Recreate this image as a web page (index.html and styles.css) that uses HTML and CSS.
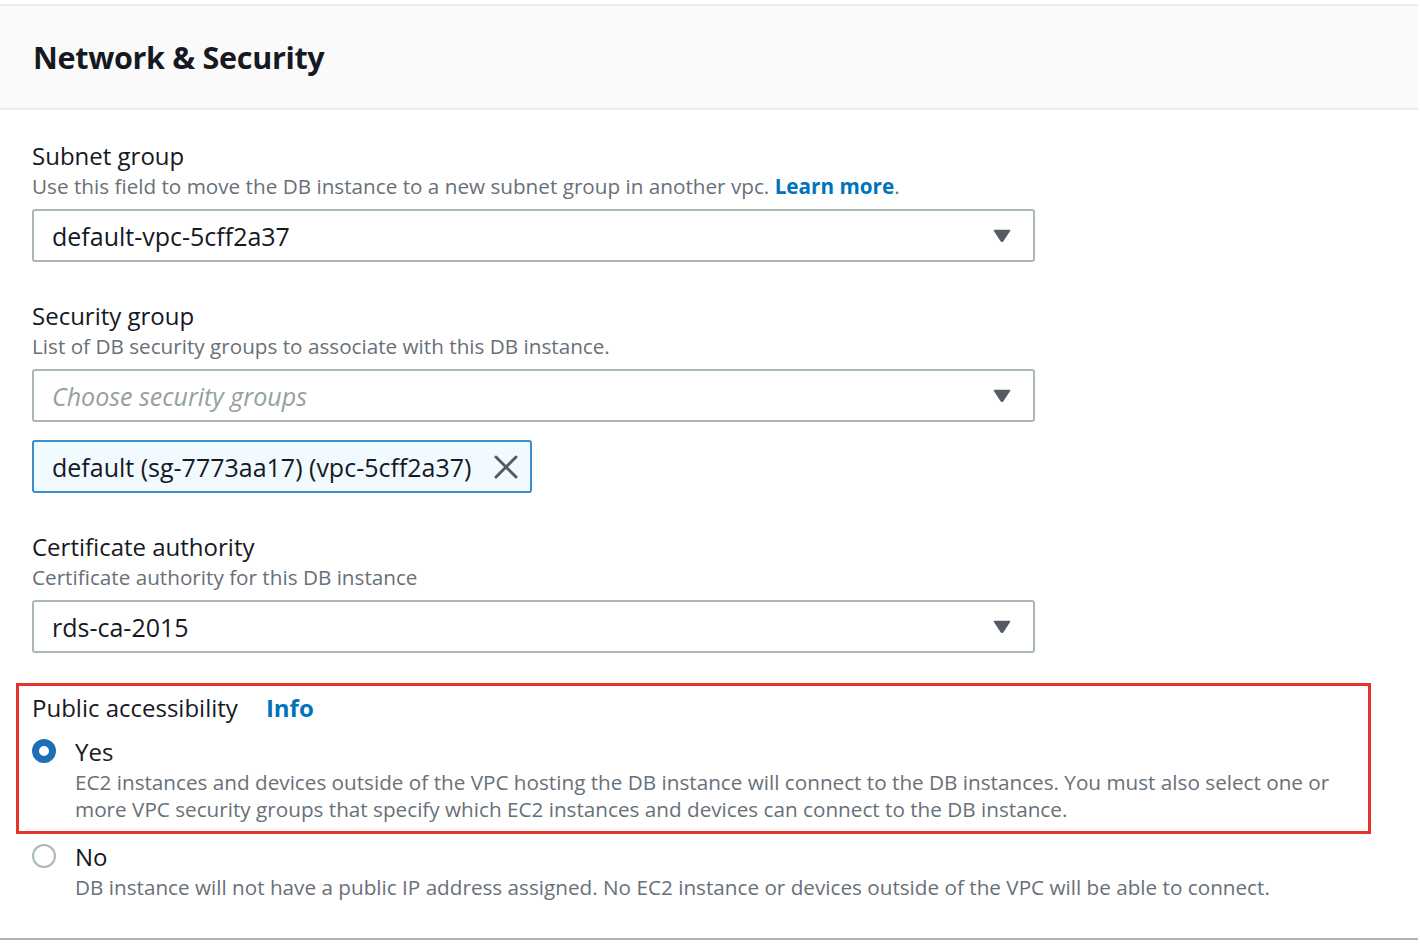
FILE: index.html
```html
<!DOCTYPE html>
<html lang="en">
<head>
<meta charset="utf-8">
<title>Network &amp; Security</title>
<link rel="stylesheet" href="styles.css">
</head>
<body>
<section class="panel">
  <header class="panel-header">
    <h2 class="panel-title">Network &amp; Security</h2>
  </header>
  <div class="panel-body">
    <div class="field">
      <div class="label">Subnet group</div>
      <div class="desc">Use this field to move the DB instance to a new subnet group in another vpc. <a class="link" href="#">Learn more</a>.</div>
      <div class="select">
        <span class="select-value">default-vpc-5cff2a37</span>
        <svg class="caret" width="18" height="13" viewBox="0 0 18 13"><path d="M1.5 1.5 H16.5 L9.8 11.8 Q9 12.8 8.2 11.8 Z" fill="#545b64" stroke="#545b64" stroke-width="1.5" stroke-linejoin="round"/></svg>
      </div>
    </div>

    <div class="field">
      <div class="label">Security group</div>
      <div class="desc">List of DB security groups to associate with this DB instance.</div>
      <div class="select">
        <span class="select-value placeholder">Choose security groups</span>
        <svg class="caret" width="18" height="13" viewBox="0 0 18 13"><path d="M1.5 1.5 H16.5 L9.8 11.8 Q9 12.8 8.2 11.8 Z" fill="#545b64" stroke="#545b64" stroke-width="1.5" stroke-linejoin="round"/></svg>
      </div>
      <div class="token">
        <span class="token-text">default (sg-7773aa17) (vpc-5cff2a37)</span>
        <svg class="token-x" width="24" height="24" viewBox="0 0 24 24"><path d="M2 2 L22 22 M22 2 L2 22" stroke="#545b64" stroke-width="3" stroke-linecap="round" fill="none"/></svg>
      </div>
    </div>

    <div class="field">
      <div class="label">Certificate authority</div>
      <div class="desc">Certificate authority for this DB instance</div>
      <div class="select">
        <span class="select-value">rds-ca-2015</span>
        <svg class="caret" width="18" height="13" viewBox="0 0 18 13"><path d="M1.5 1.5 H16.5 L9.8 11.8 Q9 12.8 8.2 11.8 Z" fill="#545b64" stroke="#545b64" stroke-width="1.5" stroke-linejoin="round"/></svg>
      </div>
    </div>

    <div class="highlight">
      <div class="label-row">
        <span class="label">Public accessibility</span>
        <a class="info" href="#">Info</a>
      </div>
      <div class="radio-option first">
        <span class="radio checked"></span>
        <div class="radio-text">
          <div class="radio-label">Yes</div>
          <div class="radio-desc">EC2 instances and devices outside of the VPC hosting the DB instance will connect to the DB instances. You must also select one or more VPC security groups that specify which EC2 instances and devices can connect to the DB instance.</div>
        </div>
      </div>
    </div>
    <div class="radio-option second">
      <span class="radio"></span>
      <div class="radio-text">
        <div class="radio-label">No</div>
        <div class="radio-desc">DB instance will not have a public IP address assigned. No EC2 instance or devices outside of the VPC will be able to connect.</div>
      </div>
    </div>
  </div>
</section>
</body>
</html>
```

FILE: styles.css
```css
* { box-sizing: border-box; }

html, body {
  margin: 0;
  padding: 0;
  background: #ffffff;
}

body {
  font-family: "Open Sans", "Noto Sans", Arial, sans-serif;
  color: #16191f;
  width: 1420px;
  height: 944px;
  overflow: hidden;
}

.panel {
  margin-top: 4px;
  width: 1418px;
  border-top: 2px solid #eaeded;
  border-bottom: 2px solid #aab7b8;
}

.panel-header {
  height: 104px;
  background: #fafafa;
  border-bottom: 2px solid #eaeded;
  display: flex;
  align-items: center;
  padding-left: 33px;
}

.panel-title {
  margin: 0;
  font-size: 30.5px;
  font-weight: 700;
  letter-spacing: -0.3px;
  color: #16191f;
}

.panel-body {
  padding: 30px 32px 37px 32px;
}

.field {
  margin-bottom: 38px;
}

.label {
  font-size: 24px;
  line-height: 31px;
  color: #16191f;
}

.desc {
  font-size: 20.7px;
  line-height: 31px;
  color: #687078;
}

.link {
  color: #0073bb;
  font-weight: 700;
  text-decoration: none;
}

.select {
  margin-top: 7px;
  width: 1003px;
  height: 53px;
  border: 2px solid #aab7b8;
  border-radius: 3px;
  display: flex;
  align-items: center;
  justify-content: space-between;
  padding: 0 22px 0 18px;
}

.select-value {
  font-size: 25px;
  color: #16191f;
}

.placeholder {
  font-style: italic;
  color: #95a0a1;
}

.caret {
  display: block;
}

.token {
  margin-top: 18px;
  width: 500px;
  height: 53px;
  background: #f1faff;
  border: 2px solid #3a8dcf;
  border-radius: 3px;
  display: flex;
  align-items: center;
  padding: 0 12px 0 18px;
  gap: 20px;
}

.token-text {
  font-size: 25px;
  color: #16191f;
  white-space: nowrap;
}

.token-x {
  display: block;
  margin-left: auto;
}

.highlight {
  margin-top: -8px;
  margin-left: -16px;
  width: 1355px;
  border: 3px solid #e5322b;
  padding: 6px 20px 8px 13px;
}

.label-row {
  display: flex;
  align-items: center;
  gap: 28px;
}

.info {
  font-size: 24px;
  line-height: 31px;
  font-weight: 700;
  color: #0073bb;
  text-decoration: none;
}

.radio-option {
  display: flex;
  align-items: flex-start;
  gap: 19px;
}

.radio-option.first {
  margin-top: 13px;
}

.radio-option.second {
  margin-top: 7px;
}

.radio {
  flex: none;
  width: 24px;
  height: 24px;
  margin-top: 3px;
  border-radius: 50%;
  border: 2px solid #aab7b8;
  background: #fff;
}

.radio.checked {
  border: 7px solid #1f6fb7;
}

.radio-label {
  font-size: 24px;
  line-height: 31px;
  color: #16191f;
}

.radio-desc {
  margin-top: 2px;
  font-size: 20.7px;
  line-height: 27px;
  color: #687078;
}
```
